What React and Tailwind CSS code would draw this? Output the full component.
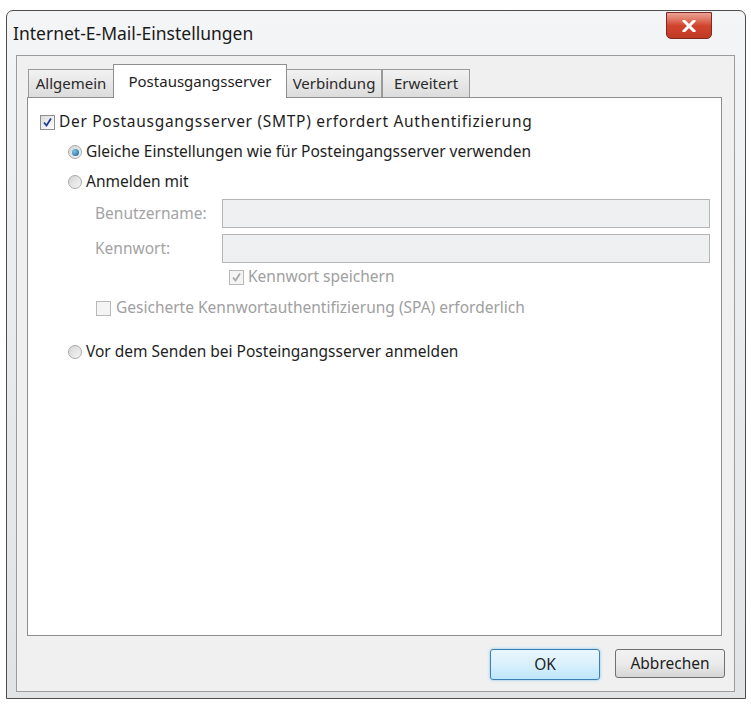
import { useState } from "react";

const font = { fontFamily: '"Noto Sans", "Open Sans", sans-serif' };

const tabs = [
  { label: "Allgemein", w: "w-[86px]" },
  { label: "Postausgangsserver", w: "w-[174px]" },
  { label: "Verbindung", w: "w-[96px]" },
  { label: "Erweitert", w: "w-[88px]" },
];

const CheckBox = ({ checked, disabled }) => (
  <span
    className={`flex h-[15px] w-[15px] shrink-0 items-center justify-center border ${
      disabled ? "border-[#b8b8b8] bg-[#f4f4f4]" : "border-[#8e8f8f] bg-gradient-to-br from-[#dcdcdc] to-white"
    }`}
  >
    {checked && (
      <svg width="11" height="11" viewBox="0 0 11 11">
        <path
          d="M2 5.5 L4.5 8.5 L9 1.5"
          fill="none"
          stroke={disabled ? "#a8a8a8" : "#1c3f94"}
          strokeWidth="1.8"
        />
      </svg>
    )}
  </span>
);

const Radio = ({ checked }) => (
  <span className="flex h-[14px] w-[14px] shrink-0 items-center justify-center rounded-full border border-[#a8a8a8] bg-gradient-to-br from-[#d4d4d4] to-[#f6f6f6]">
    {checked && (
      <span className="h-[7px] w-[7px] rounded-full bg-[radial-gradient(circle_at_35%_35%,#7fc6ea,#155a8a)]" />
    )}
  </span>
);

const Field = ({ label }) => (
  <div className="flex h-[29px] items-center">
    <span className="w-[127px] text-[#a3a3a3]">{label}</span>
    <div className="h-full flex-1 border border-[#b5b5b5] bg-[#eef0f2]" />
  </div>
);

export default function App() {
  const [active] = useState(1);

  return (
    <div
      className="h-[704px] w-[751px] bg-white pb-[5px] pl-[6px] pr-[5px] pt-[10px] text-[15.5px] leading-none text-[#1e1e1e]"
      style={font}
    >
      <div className="flex h-full flex-col rounded-t-[7px] border border-[#4d4d4d] bg-gradient-to-b from-[#f4f5f6] via-[#e9eaeb] to-[#e2e3e4]">
        {/* title bar */}
        <div className="flex h-[44px] shrink-0 items-start justify-between pl-[6px] pr-[33px]">
          <span className="mt-[14px] text-[17.5px] text-[#1a1a1a]">Internet-E-Mail-Einstellungen</span>
          <button className="mt-[1px] flex h-[27px] w-[46px] items-center justify-center rounded-b-[5px] border border-[#7a2a22] bg-gradient-to-b from-[#e9a395] via-[#d2452f] to-[#c13a24]">
            <svg width="14" height="12" viewBox="0 0 14 12">
              <path d="M2 1 L12 11 M12 1 L2 11" stroke="white" strokeWidth="3" strokeLinecap="square" />
            </svg>
          </button>
        </div>

        {/* client area */}
        <div className="mb-[6px] ml-[9px] mr-[10px] flex flex-1 flex-col border border-[#9c9c9c] bg-[#f0f0f0] pl-[10px] pr-[12px] pt-[8px]">
          <div className="flex h-[33px] items-end pl-[1px] text-[15px]">
            {tabs.map((t, i) =>
              i === active ? (
                <div
                  key={t.label}
                  className={`relative z-10 -mb-px -mx-[1px] flex h-[34px] items-start justify-center border border-b-0 border-[#8e8e8e] bg-white pt-[9px] ${t.w}`}
                >
                  {t.label}
                </div>
              ) : (
                <div
                  key={t.label}
                  className={`flex h-[28px] items-center justify-center border border-b-0 border-[#9a9a9a] bg-gradient-to-b from-[#f2f2f2] to-[#dcdcdc] text-[#2a2a2a] ${t.w}`}
                >
                  {t.label}
                </div>
              )
            )}
          </div>

          {/* tab panel */}
          <div className="flex h-[539px] flex-col border border-[#8e8e8e] bg-white pl-[12px] pr-[11px] pt-[14px]">
            <label className="flex h-[20px] items-center gap-[4px]">
              <CheckBox checked />
              <span className="tracking-[0.7px]">Der Postausgangsserver (SMTP) erfordert Authentifizierung</span>
            </label>

            <div className="flex flex-col pl-[28px]">
              <label className="mt-[10px] flex h-[20px] items-center gap-[4px]">
                <Radio checked />
                <span>Gleiche Einstellungen wie für Posteingangsserver verwenden</span>
              </label>
              <label className="mt-[10px] flex h-[20px] items-center gap-[4px]">
                <Radio />
                <span>Anmelden mit</span>
              </label>

              <div className="mt-[7px] flex flex-col gap-[6px] pl-[27px]">
                <Field label="Benutzername:" />
                <Field label="Kennwort:" />
              </div>

              <label className="ml-[161px] mt-[4px] flex h-[20px] items-center gap-[4px] text-[#a0a0a0]">
                <CheckBox checked disabled />
                <span>Kennwort speichern</span>
              </label>
              <label className="ml-[28px] mt-[11px] flex h-[20px] items-center gap-[5px] text-[#a0a0a0]">
                <CheckBox disabled />
                <span>Gesicherte Kennwortauthentifizierung (SPA) erforderlich</span>
              </label>

              <label className="mt-[24px] flex h-[20px] items-center gap-[4px]">
                <Radio />
                <span>Vor dem Senden bei Posteingangsserver anmelden</span>
              </label>
            </div>
          </div>

          {/* dialog buttons */}
          <div className="-mr-[3px] flex flex-1 items-start justify-end gap-[15px] pt-[13px]">
            <button className="h-[31px] w-[110px] rounded-[3px] border border-[#3c7fb1] bg-gradient-to-b from-[#eaf6fd] via-[#d9f0fc] to-[#bee6fd] shadow-[0_0_3px_#7ec4ee]">
              OK
            </button>
            <button className="h-[29px] w-[110px] rounded-[3px] border border-[#707070] bg-gradient-to-b from-[#f2f2f2] via-[#ebebeb] to-[#d6d6d6]">
              Abbrechen
            </button>
          </div>
        </div>
      </div>
    </div>
  );
}
